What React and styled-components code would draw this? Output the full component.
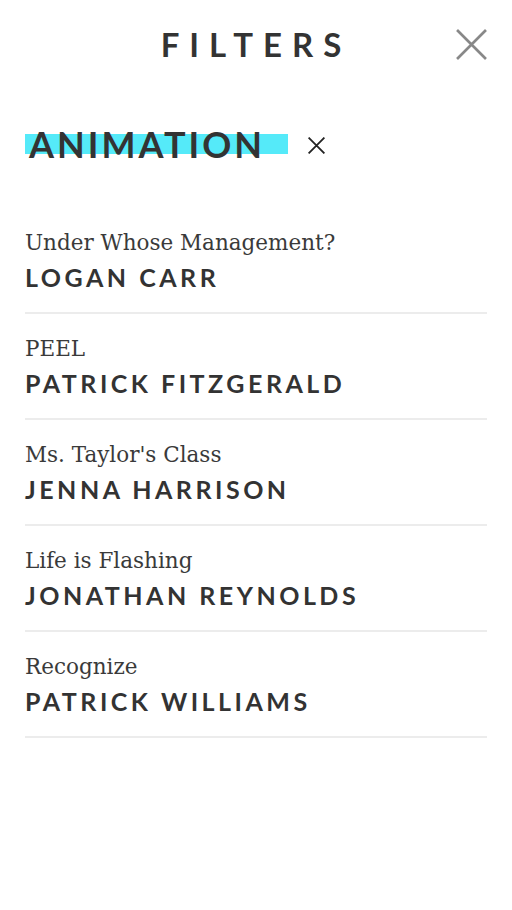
import React from 'react';
import styled, { createGlobalStyle } from 'styled-components';

const GlobalStyle = createGlobalStyle`
  html, body {
    margin: 0;
    padding: 0;
    background: #ffffff;
  }
  * {
    box-sizing: border-box;
  }
`;

const Page = styled.div`
  width: 512px;
  min-height: 910px;
  background: #ffffff;
  color: #333333;
  font-family: Lato, "Liberation Sans", sans-serif;
`;

const Header = styled.header`
  position: relative;
  height: 90px;
  display: flex;
  align-items: center;
  justify-content: center;
`;

const Title = styled.h1`
  margin: 0;
  margin-top: -2px;
  font-size: 33px;
  font-weight: 700;
  letter-spacing: 10px;
  color: #333;
  line-height: 1;
`;

const CloseButton = styled.button`
  position: absolute;
  right: 24px;
  top: 27px;
  width: 34px;
  height: 34px;
  padding: 0;
  border: 0;
  background: none;
  display: flex;
  align-items: center;
  justify-content: center;
  cursor: pointer;
`;

const Active = styled.div`
  display: flex;
  align-items: flex-start;
  gap: 20px;
  padding: 34px 25px 0;
  height: 136px;
`;

const Tag = styled.span`
  display: inline-block;
  font-size: 36px;
  font-weight: 700;
  letter-spacing: 3px;
  line-height: 40px;
  padding: 0 23px 0 4px;
  color: #333;
  background: linear-gradient(
    to bottom,
    transparent 10px,
    #55eaf9 10px,
    #55eaf9 30px,
    transparent 30px
  );
`;

const RemoveTag = styled.button`
  border: 0;
  background: none;
  padding: 0;
  margin-top: 13px;
  width: 18px;
  height: 18px;
  display: flex;
  cursor: pointer;
`;

const List = styled.ul`
  list-style: none;
  margin: 0;
  padding: 0 25px;
`;

const Row = styled.li`
  padding: 0 0 18px;
  margin-bottom: 18px;
  border-bottom: 2px solid #ececec;
`;

const Film = styled.div`
  font-family: "DejaVu Serif", "Liberation Serif", serif;
  font-size: 21.5px;
  line-height: 34px;
  color: #3a3a3a;
`;

const Director = styled.div`
  font-family: Lato, "Liberation Sans", sans-serif;
  font-size: 25px;
  font-weight: 700;
  letter-spacing: 3.5px;
  line-height: 34px;
  color: #333;
`;

const films = [
  { title: 'Under Whose Management?', director: 'LOGAN CARR' },
  { title: 'PEEL', director: 'PATRICK FITZGERALD' },
  { title: "Ms. Taylor's Class", director: 'JENNA HARRISON' },
  { title: 'Life is Flashing', director: 'JONATHAN REYNOLDS' },
  { title: 'Recognize', director: 'PATRICK WILLIAMS' },
];

function Cross({ size, color, weight }) {
  return (
    <svg width={size} height={size} viewBox="0 0 30 30">
      <path d="M1 1 L29 29 M29 1 L1 29" stroke={color} strokeWidth={weight} fill="none" />
    </svg>
  );
}

export default function App() {
  return (
    <Page>
      <GlobalStyle />
      <Header>
        <Title>FILTERS</Title>
        <CloseButton aria-label="Close">
          <Cross size={31} color="#888" weight={2.6} />
        </CloseButton>
      </Header>
      <Active>
        <Tag>ANIMATION</Tag>
        <RemoveTag aria-label="Remove filter">
          <Cross size={17} color="#222" weight={3.2} />
        </RemoveTag>
      </Active>
      <List>
        {films.map((f) => (
          <Row key={f.director}>
            <Film>{f.title}</Film>
            <Director>{f.director}</Director>
          </Row>
        ))}
      </List>
    </Page>
  );
}
